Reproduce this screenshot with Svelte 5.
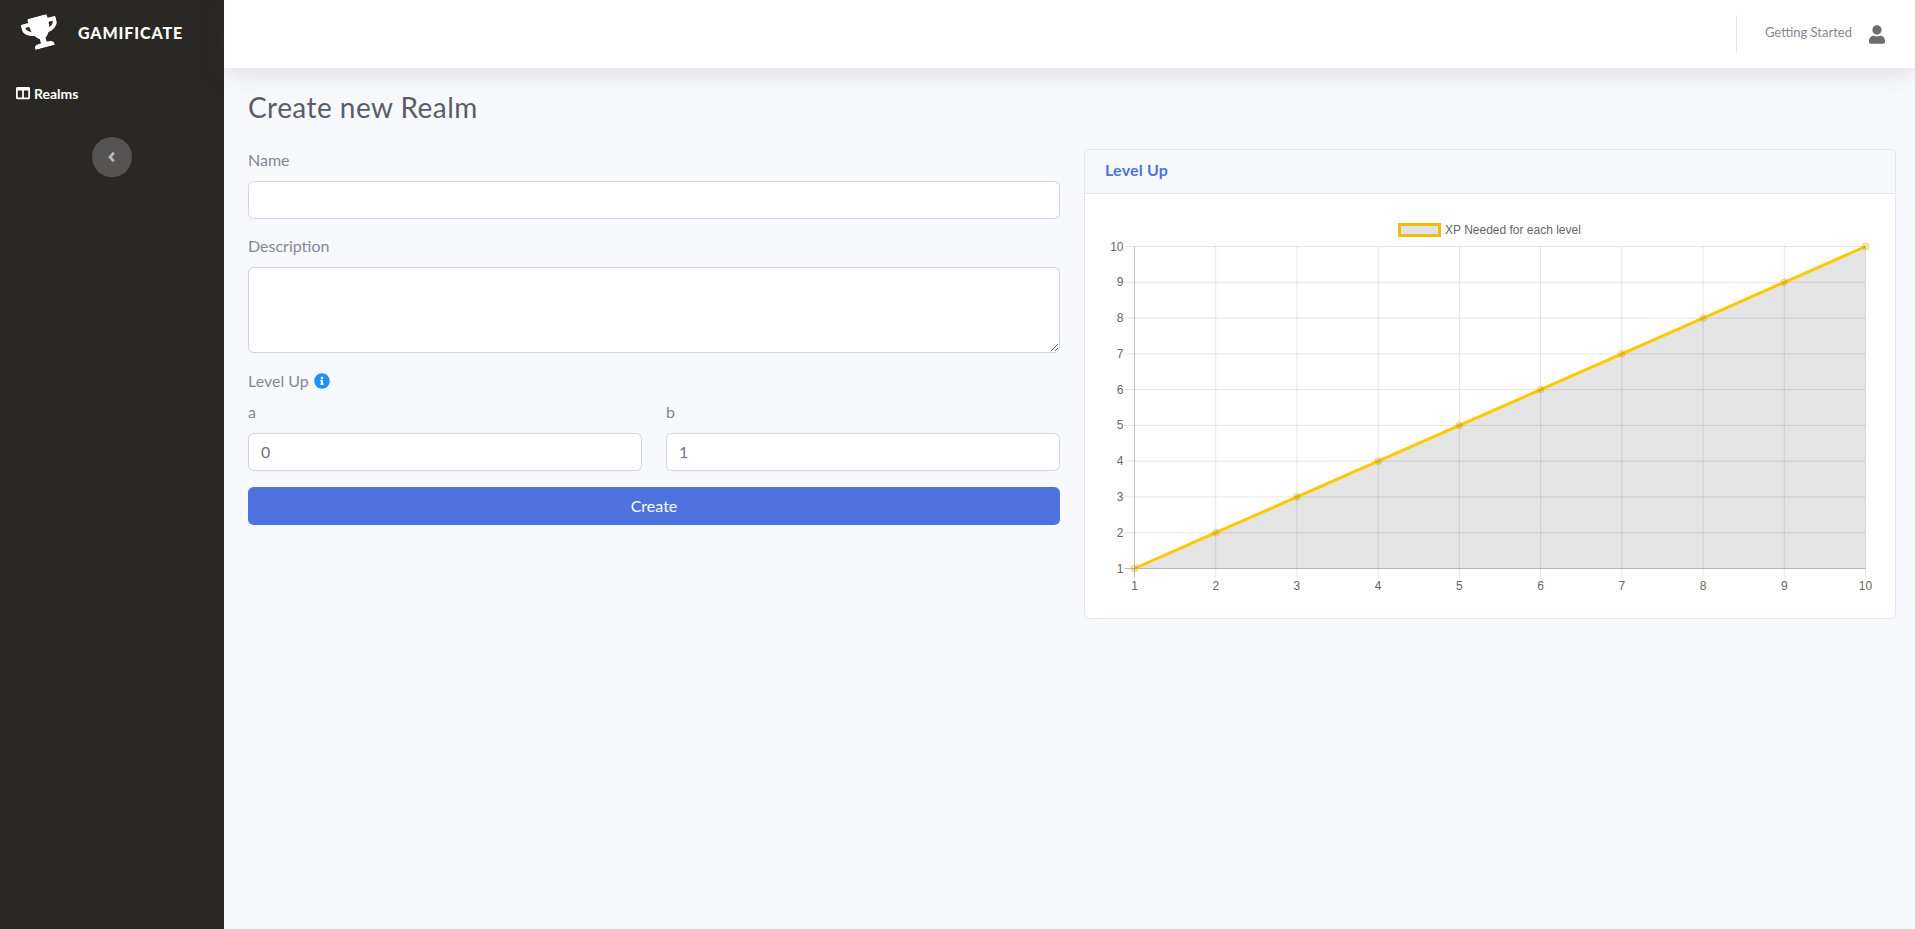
<script>
  const levels = [1, 2, 3, 4, 5, 6, 7, 8, 9, 10];
  const left = 30.5;
  const right = 761.5;
  const top = 32.5;
  const bottom = 354.5;
  const xAt = (v) => left + ((v - 1) * (right - left)) / 9;
  const yAt = (v) => bottom - ((v - 1) * (bottom - top)) / 9;
  const linePoints = levels.map((v) => `${xAt(v)},${yAt(v)}`).join(' ');
  const areaPoints = `${linePoints} ${right},${bottom} ${left},${bottom}`;
</script>

<div class="wrapper">
  <aside class="sidebar">
    <a class="brand" href="#top">
      <svg class="trophy" viewBox="0 0 576 512" aria-hidden="true">
        <path fill="currentColor" d="M552 64H448V24c0-13.3-10.7-24-24-24H152c-13.3 0-24 10.7-24 24v40H24C10.7 64 0 74.7 0 88v56c0 35.7 22.5 72.4 61.9 100.7 31.5 22.7 69.8 37.1 110 41.7 31.4 52.1 68.1 73.6 68.1 73.6v72h-48c-35.3 0-64 20.7-64 56v12c0 6.6 5.4 12 12 12h296c6.6 0 12-5.4 12-12v-12c0-35.3-28.7-56-64-56h-48v-72s36.7-21.5 68.1-73.6c40.3-4.6 78.7-19 110-41.7 39.3-28.3 61.9-65 61.9-100.7V88c0-13.3-10.7-24-24-24zM99.3 192.8C74.9 175.2 64 155.6 64 144v-16h64.2c1 32.6 5.8 61.2 12.8 86.2-15.1-5.2-29.2-12.4-41.7-21.4zM512 144c0 16.1-17.7 36.1-35.3 48.8-12.5 9-26.7 16.2-41.8 21.4 7-25 11.8-53.6 12.8-86.2H512v16z" />
      </svg>
      <span class="brand-text">GAMIFICATE</span>
    </a>
    <a class="nav-link" href="#realms">
      <svg class="columns" viewBox="0 0 512 512" aria-hidden="true">
        <path fill="currentColor" d="M464 32H48C21.49 32 0 53.49 0 80v352c0 26.51 21.49 48 48 48h416c26.51 0 48-21.49 48-48V80c0-26.51-21.49-48-48-48zM224 416H64V160h160v256zm224 0H288V160h160v256z" />
      </svg>
      <span>Realms</span>
    </a>
    <button class="toggle" aria-label="Collapse sidebar">
      <svg viewBox="0 0 10 12" aria-hidden="true">
        <path d="M6.9 1.8 3 6l3.9 4.2" fill="none" stroke="currentColor" stroke-width="2.8" />
      </svg>
    </button>
  </aside>

  <div class="main">
    <header class="topbar">
      <div class="divider"></div>
      <span class="user-name">Getting Started</span>
      <svg class="user-icon" viewBox="0 0 448 512" aria-hidden="true">
        <path fill="currentColor" d="M224 256c70.7 0 128-57.3 128-128S294.7 0 224 0 96 57.3 96 128s57.3 128 128 128zm89.6 32h-16.7c-22.2 10.2-46.9 16-72.9 16s-50.6-5.8-72.9-16h-16.7C60.2 288 0 348.2 0 422.4V464c0 26.5 21.5 48 48 48h352c26.5 0 48-21.5 48-48v-41.6c0-74.2-60.2-134.4-134.4-134.4z" />
      </svg>
    </header>

    <main class="content">
      <h1>Create new Realm</h1>
      <div class="columns-row">
        <form class="realm-form">
          <div class="field">
            <label for="name">Name</label>
            <input id="name" type="text" />
          </div>
          <div class="field">
            <label for="description">Description</label>
            <textarea id="description"></textarea>
          </div>
          <div class="level-label">
            <span>Level Up</span>
            <svg class="info" viewBox="0 0 512 512" aria-hidden="true">
              <path fill="currentColor" d="M256 8C119.043 8 8 119.083 8 256c0 137 111.043 248 248 248s248-111 248-248C504 119.083 392.957 8 256 8zm0 110c23.196 0 42 18.804 42 42s-18.804 42-42 42-42-18.804-42-42 18.804-42 42-42zm56 254c0 6.627-5.373 12-12 12h-88c-6.627 0-12-5.373-12-12v-24c0-6.627 5.373-12 12-12h12v-64h-12c-6.627 0-12-5.373-12-12v-24c0-6.627 5.373-12 12-12h64c6.627 0 12 5.373 12 12v100h12c6.627 0 12 5.373 12 12v24z" />
            </svg>
          </div>
          <div class="pair">
            <div class="field">
              <label for="a">a</label>
              <input id="a" type="text" value="0" />
            </div>
            <div class="field">
              <label for="b">b</label>
              <input id="b" class="value-b" type="text" value="1" />
            </div>
          </div>
          <button class="submit" type="button">Create</button>
        </form>

        <section class="card">
          <div class="card-header">Level Up</div>
          <div class="card-body">
            <svg class="chart" viewBox="0 0 770 385" width="770" height="385">
              <rect class="legend-box" x="295.5" y="10.5" width="40" height="11" />
              <text class="legend-text" x="341" y="20">XP Needed for each level</text>

              {#each levels as v}
                <line class={v === 1 ? 'axis' : 'grid'} x1={left - 10} x2={right} y1={yAt(v)} y2={yAt(v)} />
                <line class={v === 1 ? 'axis' : 'grid'} x1={xAt(v)} x2={xAt(v)} y1={top} y2={bottom + 10} />
                <text class="tick" x={left - 11} y={yAt(v) + 4} text-anchor="end">{v}</text>
                <text class="tick" x={xAt(v)} y={bottom + 21} text-anchor="middle">{v}</text>
              {/each}

              <polygon class="area" points={areaPoints} />
              <polyline class="line" points={linePoints} />
              {#each levels as v}
                <circle class="point" cx={xAt(v)} cy={yAt(v)} r="3.5" />
              {/each}
            </svg>
          </div>
        </section>
      </div>
    </main>
  </div>
</div>

<style>
  :global(body) {
    margin: 0;
    background: #f8f9fc;
  }

  .wrapper {
    display: flex;
    min-height: 929px;
    font-family: Lato, "Open Sans", sans-serif;
    font-size: 16px;
    color: #858796;
  }

  .sidebar {
    width: 224px;
    flex: none;
    display: flex;
    flex-direction: column;
    background: #2a2824;
    color: #fff;
  }

  .brand {
    box-sizing: border-box;
    height: 68px;
    display: flex;
    align-items: center;
    padding: 0 0 4px 23px;
    color: #fff;
    text-decoration: none;
  }

  .trophy {
    width: 36px;
    height: 32px;
    transform: rotate(-15deg);
  }

  .brand-text {
    margin-left: 19px;
    font-size: 16px;
    font-weight: 900;
    letter-spacing: 0.9px;
  }

  .nav-link {
    display: flex;
    align-items: center;
    gap: 4px;
    margin-top: 17px;
    padding-left: 16px;
    height: 16px;
    color: #fff;
    font-size: 14px;
    font-weight: 700;
    text-decoration: none;
  }

  .columns {
    width: 14px;
    height: 14px;
  }

  .toggle {
    align-self: center;
    margin-top: 36px;
    width: 40px;
    height: 40px;
    padding: 0;
    display: flex;
    align-items: center;
    justify-content: center;
    border: 0;
    border-radius: 50%;
    background: #555452;
    color: #b5b7c0;
  }

  .toggle svg {
    width: 10px;
    height: 12px;
  }

  .main {
    flex: 1;
    min-width: 0;
    display: flex;
    flex-direction: column;
  }

  .topbar {
    height: 68px;
    display: flex;
    align-items: center;
    justify-content: flex-end;
    padding-right: 30px;
    background: #fff;
    box-shadow: 0 4px 28px rgba(58, 59, 69, 0.15);
  }

  .divider {
    width: 1px;
    height: 38px;
    background: #e3e6f0;
    margin-right: 28px;
  }

  .user-name {
    font-size: 13px;
    color: #858796;
    padding-bottom: 5px;
  }

  .user-icon {
    width: 16px;
    height: 21px;
    margin-left: 17px;
    color: #6e6e6e;
  }

  .content {
    padding: 23px 19px 0 24px;
  }

  h1 {
    margin: 0 0 24.4px;
    font-size: 28px;
    font-weight: 400;
    letter-spacing: 0.45px;
    line-height: 1.2;
    color: #5a5c69;
  }

  .columns-row {
    display: grid;
    grid-template-columns: 1fr 1fr;
    gap: 24px;
    align-items: start;
  }

  .realm-form {
    display: flex;
    flex-direction: column;
  }

  .field {
    display: flex;
    flex-direction: column;
    margin-bottom: 16px;
  }

  label {
    line-height: 22px;
    margin-bottom: 10px;
  }

  input,
  textarea {
    box-sizing: border-box;
    width: 100%;
    height: 38px;
    padding: 6px 12px;
    border: 1px solid #d1d3e2;
    border-radius: 5.6px;
    background: #fff;
    font: inherit;
    color: #6e707e;
  }

  textarea {
    height: 86px;
    display: block;
  }

  .value-b {
    color: #6e7488;
  }

  .level-label {
    display: flex;
    align-items: center;
    gap: 5px;
    line-height: 24px;
    margin-bottom: 8px;
  }

  .info {
    width: 16px;
    height: 16px;
    color: #1e90ff;
  }

  .pair {
    display: grid;
    grid-template-columns: 1fr 1fr;
    gap: 24px;
  }

  .submit {
    height: 38px;
    border: 0;
    border-radius: 5.6px;
    background: #4e73df;
    color: #fff;
    font: inherit;
  }

  .card {
    background: #fff;
    border: 1px solid #e3e6f0;
    border-radius: 5.6px;
    overflow: hidden;
  }

  .card-header {
    box-sizing: border-box;
    height: 44px;
    display: flex;
    align-items: center;
    padding: 0 20px 3px;
    background: #f8f9fc;
    border-bottom: 1px solid #e3e6f0;
    color: #4e73df;
    font-weight: 700;
    letter-spacing: 0.2px;
  }

  .card-body {
    padding: 20px 19px 19px 19px;
  }

  .chart {
    display: block;
    font-family: "Liberation Sans", Arial, sans-serif;
  }

  .legend-box {
    fill: #e3e3e3;
    stroke: #f0bd0c;
    stroke-width: 3;
  }

  .legend-text,
  .tick {
    font-size: 12px;
    fill: #666;
  }

  .grid {
    stroke: rgba(0, 0, 0, 0.1);
  }

  .axis {
    stroke: rgba(0, 0, 0, 0.25);
  }

  .area {
    fill: rgba(0, 0, 0, 0.105);
  }

  .line {
    fill: none;
    stroke: #ffc800;
    stroke-width: 3;
  }

  .point {
    fill: rgba(0, 0, 0, 0.1);
    stroke: rgba(255, 200, 0, 0.55);
    stroke-width: 1;
  }
</style>
